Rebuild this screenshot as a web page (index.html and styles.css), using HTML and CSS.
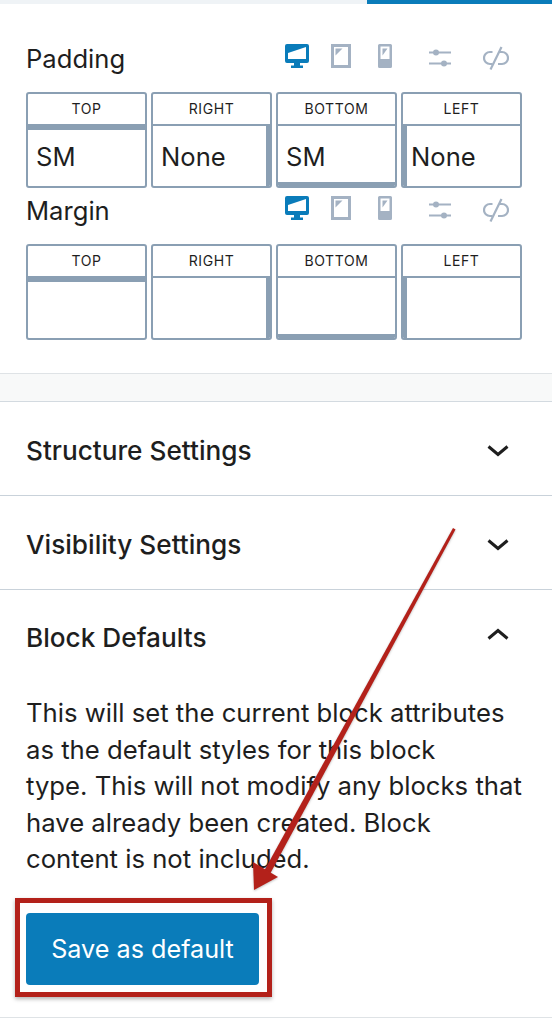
FILE: index.html
```html
<!DOCTYPE html>
<html lang="en">
  <head>
    <meta charset="UTF-8" />
    <meta name="viewport" content="width=device-width, initial-scale=1.0" />
    <title>Block Settings</title>
    <link rel="stylesheet" href="styles.css">
  </head>
  <body>
    <svg class="icon-defs" width="0" height="0">
      <symbol id="icon-desktop" viewBox="0 0 24 24">
        <path d="M2 0h20a2 2 0 0 1 2 2v15a2 2 0 0 1-2 2h-7v2.500h3V24H6v-2.500h3V19H2a2 2 0 0 1-2-2V2a2 2 0 0 1 2-2z" fill="currentColor" />
        <path d="M3 3h18v12H3z" fill="#fff" />
        <path d="M3 3h18L3 9z" fill="currentColor" />
      </symbol>
      <symbol id="icon-tablet" viewBox="0 0 20 24">
        <path d="M1.500 1.500h17v21h-17z" fill="#fff" stroke="currentColor" stroke-width="3" />
        <path d="M4.500 4.500h7l-7 7z" fill="currentColor" />
      </symbol>
      <symbol id="icon-phone" viewBox="0 0 14 24">
        <path d="M1.500 0h11A1.500 1.500 0 0 1 14 1.500v21a1.500 1.500 0 0 1-1.500 1.500h-11A1.500 1.500 0 0 1 0 22.500v-21A1.500 1.500 0 0 1 1.500 0z" fill="currentColor" />
        <path d="M2.500 2.500h9v12.500h-9z" fill="#fff" />
        <path d="M4.500 4.500h5l-5 7z" fill="currentColor" />
      </symbol>
      <symbol id="icon-sliders" viewBox="0 0 22 18">
        <path d="M0 3.500h22M0 14.500h22" fill="none" stroke="currentColor" stroke-width="1.800" />
        <circle cx="7" cy="3.500" r="3" fill="currentColor" />
        <circle cx="15" cy="14.500" r="3" fill="currentColor" />
      </symbol>
      <symbol id="icon-unlink" viewBox="0 0 26 24">
        <path d="M9.500 6H7a6 6 0 0 0 0 12h2.500M16 6h3a6 6 0 0 1 0 12h-4" fill="none" stroke="currentColor" stroke-width="2.200" />
        <path d="M18.500 1 7.500 23.500" fill="none" stroke="currentColor" stroke-width="2.200" />
      </symbol>
      <symbol id="icon-chevron" viewBox="0 0 22 12">
        <path d="M1.500 1.500 11 9.500l9.500-8" fill="none" stroke="currentColor" stroke-width="3" />
      </symbol>
    </svg>

    <div class="top-tabs">
      <div class="tab-idle"></div>
      <div class="tab-active"></div>
    </div>

    <section class="spacing-panel">
      <div class="spacing-head">
        <span class="spacing-title">Padding</span>
        <div class="device-icons">
          <svg class="icon icon-desktop"><use href="#icon-desktop" /></svg>
          <svg class="icon icon-tablet"><use href="#icon-tablet" /></svg>
          <svg class="icon icon-phone"><use href="#icon-phone" /></svg>
          <svg class="icon icon-sliders"><use href="#icon-sliders" /></svg>
          <svg class="icon icon-unlink"><use href="#icon-unlink" /></svg>
        </div>
      </div>
      <div class="side-grid">
        <div class="side-box side-top">
          <div class="side-label">TOP</div>
          <div class="side-value">SM</div>
        </div>
        <div class="side-box side-right">
          <div class="side-label">RIGHT</div>
          <div class="side-value">None</div>
        </div>
        <div class="side-box side-bottom">
          <div class="side-label">BOTTOM</div>
          <div class="side-value">SM</div>
        </div>
        <div class="side-box side-left">
          <div class="side-label">LEFT</div>
          <div class="side-value">None</div>
        </div>
      </div>

      <div class="spacing-head">
        <span class="spacing-title">Margin</span>
        <div class="device-icons">
          <svg class="icon icon-desktop"><use href="#icon-desktop" /></svg>
          <svg class="icon icon-tablet"><use href="#icon-tablet" /></svg>
          <svg class="icon icon-phone"><use href="#icon-phone" /></svg>
          <svg class="icon icon-sliders"><use href="#icon-sliders" /></svg>
          <svg class="icon icon-unlink"><use href="#icon-unlink" /></svg>
        </div>
      </div>
      <div class="side-grid">
        <div class="side-box side-top">
          <div class="side-label">TOP</div>
          <div class="side-value"></div>
        </div>
        <div class="side-box side-right">
          <div class="side-label">RIGHT</div>
          <div class="side-value"></div>
        </div>
        <div class="side-box side-bottom">
          <div class="side-label">BOTTOM</div>
          <div class="side-value"></div>
        </div>
        <div class="side-box side-left">
          <div class="side-label">LEFT</div>
          <div class="side-value"></div>
        </div>
      </div>
    </section>

    <div class="panel-gap"></div>

    <div class="accordion-row">
      <span>Structure Settings</span>
      <svg class="chevron"><use href="#icon-chevron" /></svg>
    </div>
    <div class="accordion-row">
      <span>Visibility Settings</span>
      <svg class="chevron"><use href="#icon-chevron" /></svg>
    </div>
    <div class="accordion-row accordion-open">
      <span>Block Defaults</span>
      <svg class="chevron chevron-up"><use href="#icon-chevron" /></svg>
    </div>

    <div class="defaults-body">
      <p class="defaults-text">
        This will set the current block attributes<br />
        as the default styles for this block<br />
        type. This will not modify any blocks that<br />
        have already been created. Block<br />
        content is not included.
      </p>
      <div class="save-highlight">
        <button type="button" class="save-button">Save as default</button>
      </div>
    </div>

    <!-- annotation arrow drawn over the screenshot -->
    <svg class="arrow-overlay" viewBox="0 0 552 1018">
      <path d="M453 528 455.500 529.500 270 874 264 871z" fill="#b3211a" />
      <path d="M253 862 278 877 254 890z" fill="#b3211a" />
    </svg>
  </body>
</html>
```

FILE: styles.css
```css
* {
  box-sizing: border-box;
}

body {
  margin: 0;
  padding: 0;
  position: relative;
  width: 552px;
  height: 1018px;
  overflow: hidden;
  font-family: "Inter", "Liberation Sans", sans-serif;
  color: #1e1e1e;
  background: #fff;
}

.icon-defs {
  position: absolute;
}

.top-tabs {
  display: flex;
  height: 4px;
}

.tab-idle {
  width: 367px;
  background: #eff3f6;
}

.tab-active {
  flex: 1;
  background: #0a7cba;
}

.spacing-panel {
  padding: 32px 30px 33px 26px;
}

.spacing-head {
  display: flex;
  justify-content: space-between;
  align-items: flex-start;
  height: 56px;
  padding-top: 8px;
}

.spacing-title {
  font-size: 25.600px;
  line-height: 30px;
}

.device-icons {
  display: flex;
  align-items: center;
  height: 24px;
  margin-right: 13px;
  color: #a4b2c3;
}

.icon {
  display: block;
}

.icon-desktop {
  width: 24px;
  height: 24px;
  color: #0a7cba;
}

.icon-tablet {
  width: 20px;
  height: 24px;
  margin-left: 22px;
}

.icon-phone {
  width: 14px;
  height: 24px;
  margin-left: 27px;
}

.icon-sliders {
  width: 22px;
  height: 18px;
  margin-left: 37px;
  margin-top: 3px;
}

.icon-unlink {
  width: 26px;
  height: 24px;
  margin-left: 32px;
  margin-top: 4px;
}

.side-grid {
  display: grid;
  grid-template-columns: repeat(4, 121px);
  gap: 4px;
}

.side-box {
  height: 96px;
  border: 2px solid #8a9fb3;
  border-radius: 3px;
  overflow: hidden;
}

.side-label {
  height: 32px;
  border-bottom: 2px solid #8a9fb3;
  font-size: 14px;
  letter-spacing: 0.6px;
  line-height: 30px;
  text-align: center;
}

.side-value {
  height: 60px;
  padding-left: 8px;
  font-size: 25.600px;
  line-height: 62px;
}

.side-top .side-value {
  box-shadow: inset 0 4px 0 #8a9fb3;
}

.side-right .side-value {
  box-shadow: inset -4px 0 0 #8a9fb3;
}

.side-bottom .side-value {
  box-shadow: inset 0 -4px 0 #8a9fb3;
}

.side-left .side-value {
  box-shadow: inset 4px 0 0 #8a9fb3;
}

.panel-gap {
  height: 29px;
  background: #f8f9f9;
  border-top: 1.500px solid #dfe3e6;
  border-bottom: 1.500px solid #d3dae0;
}

.accordion-row {
  display: flex;
  justify-content: space-between;
  align-items: center;
  height: 94px;
  padding: 4px 43px 0 26px;
  border-bottom: 1.500px solid #c9d2da;
  font-size: 26.200px;
  font-weight: 500;
}

.accordion-open {
  padding-top: 0;
  border-bottom: none;
}

.chevron {
  display: block;
  width: 22px;
  height: 12px;
  color: #1e1e1e;
}

.chevron-up {
  transform: translateY(-3px) rotate(180deg);
}

.defaults-body {
  padding: 11px 15px 0;
  height: 334px;
  border-bottom: 1.500px solid #dfe3e6;
}

.defaults-text {
  margin: 0;
  padding: 0 0 0 11px;
  font-size: 25.700px;
  line-height: 36.500px;
  white-space: nowrap;
}

.save-highlight {
  width: 257px;
  height: 99px;
  margin-top: 20px;
  padding: 10px 0 0 6px;
  border: 5px solid #b3211a;
  box-shadow: 0 2px 4px rgba(0, 0, 0, 0.3);
}

.save-button {
  display: block;
  width: 233px;
  height: 72px;
  padding: 0;
  border: none;
  border-radius: 4px;
  background: #0a7cba;
  color: #fff;
  font-family: "Inter", "Liberation Sans", sans-serif;
  font-size: 25.200px;
}

.arrow-overlay {
  position: absolute;
  top: 0;
  left: 0;
  width: 552px;
  height: 1018px;
  pointer-events: none;
  filter: drop-shadow(0 1px 1px rgba(0, 0, 0, 0.25));
}
```
